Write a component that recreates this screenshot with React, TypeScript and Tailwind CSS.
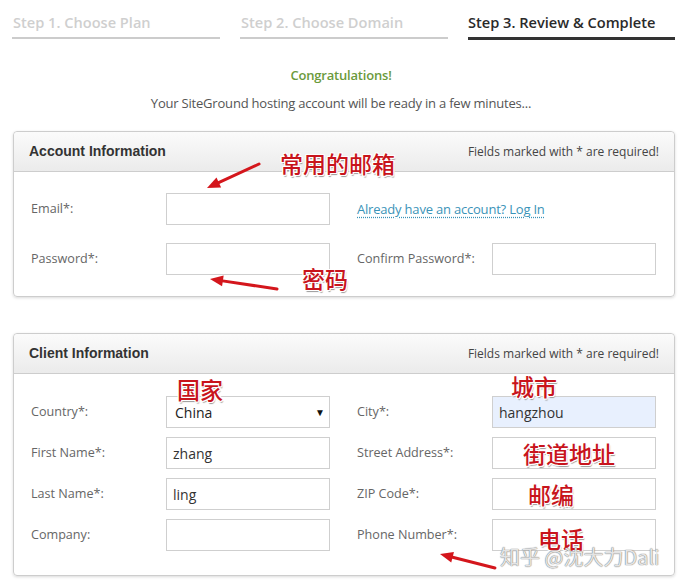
import React from "react";

const OS = "font-['Open_Sans',_'Noto_Sans',sans-serif]";
const CJK = "font-['Noto_Sans_CJK_SC',_'Noto_Sans',sans-serif]";

const anno =
  "absolute leading-none text-[#c8141c] font-medium text-[23px] " +
  CJK +
  " [text-shadow:1px_0_0_#fff,-1px_0_0_#fff,0_1px_0_#fff,0_-1px_0_#fff,1px_1px_0_#fff,-1px_-1px_0_#fff,1px_-1px_0_#fff,-1px_1px_0_#fff,1px_2px_1px_#9a9a9a]";

function Arrow({ x1, y1, x2, y2 }: { x1: number; y1: number; x2: number; y2: number }) {
  const dx = x2 - x1;
  const dy = y2 - y1;
  const len = Math.hypot(dx, dy);
  const ux = dx / len;
  const uy = dy / len;
  const hl = 13;
  const hw = 5.5;
  const bx = x2 - ux * hl;
  const by = y2 - uy * hl;
  const p1 = `${bx - uy * hw},${by + ux * hw}`;
  const p2 = `${bx + uy * hw},${by - ux * hw}`;
  return (
    <g>
      <line x1={x1} y1={y1} x2={bx + ux * 2} y2={by + uy * 2} stroke="#d4161c" strokeWidth={3} strokeLinecap="round" />
      <polygon points={`${x2},${y2} ${p1} ${p2}`} fill="#d4161c" />
    </g>
  );
}

function Input({ value, bg }: { value?: string; bg?: string }) {
  return (
    <div
      className={`w-[164px] h-[32px] border border-[#cfcfcf] flex items-center px-[6px] text-[14px] text-[#333] ${OS} ${bg ?? "bg-white"}`}
    >
      {value}
    </div>
  );
}

function Label({ children }: { children: React.ReactNode }) {
  return <div className={`w-[135px] text-[12.6px] text-[#666] ${OS}`}>{children}</div>;
}

function PanelHeader({ title }: { title: string }) {
  return (
    <div className="h-[40px] flex items-center justify-between pl-[15px] pr-[15px] border-b border-[#cdcdcd] bg-gradient-to-b from-[#fbfbfb] to-[#ebebeb] rounded-t-[4px]">
      <div className="font-['Liberation_Sans',_Arial,sans-serif] font-bold text-[14px] text-[#333]">{title}</div>
      <div className={`text-[12px] text-[#444] ${OS}`}>Fields marked with * are required!</div>
    </div>
  );
}

export default function App() {
  return (
    <div className="relative w-[682px] h-[584px] overflow-hidden bg-white">
      {/* Steps */}
      <div className={`flex gap-[20px] pl-[12px] pr-[7px] pt-[11px] ${OS}`}>
        <div className="flex-1 h-[28px] border-b-[2px] border-[#cccccc] text-[14.6px] font-semibold text-[#cfcfcf] pl-[1px] leading-[22px]">
          Step 1. Choose Plan
        </div>
        <div className="flex-1 h-[28px] border-b-[2px] border-[#cccccc] text-[14.6px] font-semibold text-[#cfcfcf] pl-[1px] leading-[22px]">
          Step 2. Choose Domain
        </div>
        <div className="flex-1 h-[29px] border-b-[3px] border-[#333] text-[14.6px] font-semibold text-[#2a2a2a] leading-[22px]">
          Step 3. Review &amp; Complete
        </div>
      </div>

      <div className={`mt-[26px] text-center text-[13px] leading-[18px] font-semibold text-[#6b9a3c] tracking-[-0.2px] ${OS}`}>
        Congratulations!
      </div>
      <div className={`mt-[10px] text-center text-[13px] leading-[18px] text-[#555] tracking-[-0.2px] ${OS}`}>
        Your SiteGround hosting account will be ready in a few minutes...
      </div>

      {/* Account Information */}
      <div className="mt-[19px] ml-[13px] w-[662px] border border-[#cdcdcd] rounded-[4px] shadow-[0_1px_3px_rgba(0,0,0,0.15)]">
        <PanelHeader title="Account Information" />
        <div className="pl-[17px] pr-[18px] pt-[21px] pb-[21px] flex flex-col gap-[18px]">
          <div className="flex items-center">
            <Label>Email*:</Label>
            <Input />
            <div className="ml-[27px] -mt-[2px]">
              <span
                className={`text-[13px] text-[#3a93b8] underline decoration-dotted decoration-[#3a93b8] underline-offset-[3px] tracking-[-0.2px] ${OS}`}
              >
                Already have an account? Log In
              </span>
            </div>
          </div>
          <div className="flex items-center">
            <Label>Password*:</Label>
            <Input />
            <div className="ml-[27px] flex items-center">
              <Label>Confirm Password*:</Label>
              <Input />
            </div>
          </div>
        </div>
      </div>

      {/* Client Information */}
      <div className="mt-[36px] ml-[13px] w-[662px] border border-[#cdcdcd] rounded-[4px] shadow-[0_1px_3px_rgba(0,0,0,0.15)]">
        <PanelHeader title="Client Information" />
        <div className="pl-[17px] pr-[18px] pt-[22px] pb-[24px] flex flex-col gap-[9px]">
          <div className="flex items-center">
            <Label>Country*:</Label>
            <div className={`w-[164px] h-[32px] border border-[#cfcfcf] flex items-center justify-between pl-[8px] pr-[4px] text-[14px] text-[#222] ${OS}`}>
              <span>China</span>
              <span className="text-[10px] text-[#111]">▼</span>
            </div>
            <div className="ml-[27px] flex items-center">
              <Label>City*:</Label>
              <Input value="hangzhou" bg="bg-[#e8f0fe]" />
            </div>
          </div>
          <div className="flex items-center">
            <Label>First Name*:</Label>
            <Input value="zhang" />
            <div className="ml-[27px] flex items-center">
              <Label>Street Address*:</Label>
              <Input />
            </div>
          </div>
          <div className="flex items-center">
            <Label>Last Name*:</Label>
            <Input value="ling" />
            <div className="ml-[27px] flex items-center">
              <Label>ZIP Code*:</Label>
              <Input />
            </div>
          </div>
          <div className="flex items-center">
            <Label>Company:</Label>
            <Input />
            <div className="ml-[27px] flex items-center">
              <Label>Phone Number*:</Label>
              <Input />
            </div>
          </div>
        </div>
      </div>

      {/* Annotations overlay */}
      <svg className="absolute left-0 top-0 pointer-events-none" width={682} height={584}>
        <Arrow x1={259} y1={164} x2={207} y2={188} />
        <Arrow x1={277} y1={289} x2={210} y2={279} />
        <Arrow x1={495} y1={568} x2={440} y2={554} />
      </svg>
      <div className={`${anno} left-[280px] top-[152px]`}>常用的邮箱</div>
      <div className={`${anno} left-[302px] top-[267px]`}>密码</div>
      <div className={`${anno} left-[177px] top-[378px]`}>国家</div>
      <div className={`${anno} left-[511px] top-[375px]`}>城市</div>
      <div className={`${anno} left-[523px] top-[442px]`}>街道地址</div>
      <div className={`${anno} left-[528px] top-[483px]`}>邮编</div>
      <div className={`${anno} left-[538px] top-[527px]`}>电话</div>
      <div
        className={`absolute left-[500px] top-[547px] text-[20px] leading-none text-white/80 ${CJK} [text-shadow:0_0_1px_#777,0_0_1px_#777]`}
      >
        知乎 @沈大力Dali
      </div>
    </div>
  );
}
